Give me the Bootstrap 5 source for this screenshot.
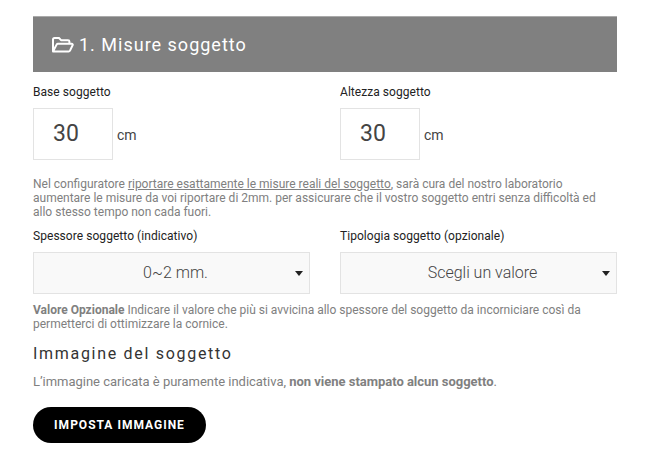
<!DOCTYPE html>
<html lang="it">
<head>
  <meta charset="UTF-8">
  <meta name="viewport" content="width=device-width, initial-scale=1.0">
  <title>Misure soggetto</title>
  <link href="https://cdn.jsdelivr.net/npm/bootstrap@5.3.0/dist/css/bootstrap.min.css" rel="stylesheet">
  <style>
    body {
      font-family: Roboto, "Liberation Sans", sans-serif;
      color: #222;
      background: #fff;
    }
    .config-wrap {
      width: 584px;
      margin-left: 33px;
      padding-top: 16px;
    }
    .step-head {
      background: #808080;
      border-top: 1px solid #aaa;
      height: 56px;
      padding-left: 19px;
      gap: 5px;
      color: #fff;
      font-size: 18px;
      letter-spacing: 1px;
    }
    .field-row {
      display: grid;
      grid-template-columns: 277px 277px;
      column-gap: 30px;
    }
    .row-sizes { margin-top: 13px; }
    .row-picks { margin-top: 10px; }
    .field-label {
      display: block;
      font-size: 12px;
      line-height: 14px;
      letter-spacing: .05px;
      margin: 0 0 9px;
      color: #222;
    }
    .size-box {
      width: 80px;
      height: 52px;
      border: 1px solid #e3e3e3;
      font-size: 23px;
      line-height: 50px;
      padding-left: 19px;
      color: #444;
    }
    .size-unit {
      font-size: 14px;
      color: #444;
      margin-left: 4px;
      margin-top: 3px;
    }
    .help-text {
      font-size: 12px;
      line-height: 14px;
      color: #808080;
      margin: 0;
    }
    .help-sizes { margin-top: 17px; }
    .help-picks { margin-top: 9px; }
    .help-text u { text-underline-offset: 1px; }
    .pick-box {
      height: 42px;
      background: #f9f9f9;
      border: 1px solid #e3e3e3;
      font-size: 16px;
      font-weight: 300;
      color: #444;
      padding: 0 6px 0 22px;
    }
    .pick-text { flex: 1; text-align: center; }
    .pick-arrow {
      width: 0;
      height: 0;
      border-left: 4px solid transparent;
      border-right: 4px solid transparent;
      border-top: 5px solid #222;
    }
    .img-title {
      font-size: 16px;
      line-height: 20px;
      font-weight: 400;
      letter-spacing: 1.7px;
      color: #333;
      margin: 13px 0 0;
    }
    .img-note {
      font-size: 13px;
      line-height: 16px;
      letter-spacing: -.02px;
      color: #808080;
      margin: 10px 0 0;
    }
    .btn-imposta {
      background: #000;
      color: #fff;
      border: 0;
      border-radius: 18px;
      width: 173px;
      height: 36px;
      margin-top: 17px;
      padding: 0;
      font-size: 12px;
      font-weight: 700;
      letter-spacing: 1px;
    }
    .btn-imposta:hover { background: #000; color: #fff; }
  </style>
</head>
<body>

<div class="config-wrap">
  <div class="step-head d-flex align-items-center">
    <svg width="22" height="16" viewBox="0 0 22 16" fill="none" stroke="#fff" stroke-width="2" stroke-linejoin="round">
      <path d="M1 14V2.5C1 1.7 1.6 1 2.5 1H7l2 2.2h7c.8 0 1.4.6 1.4 1.4V6.5"/>
      <path d="M1 14.5L4.6 7.6C4.9 7 5.4 6.7 6 6.7h13.6c.9 0 1.4.8 1 1.6l-2.6 5.3c-.3.6-.8.9-1.4.9H1z"/>
    </svg>
    <span>1. Misure soggetto</span>
  </div>

  <div class="field-row row-sizes">
    <div>
      <label class="field-label">Base soggetto</label>
      <div class="d-flex align-items-center">
        <div class="size-box">30</div>
        <span class="size-unit">cm</span>
      </div>
    </div>
    <div>
      <label class="field-label">Altezza soggetto</label>
      <div class="d-flex align-items-center">
        <div class="size-box">30</div>
        <span class="size-unit">cm</span>
      </div>
    </div>
  </div>

  <p class="help-text help-sizes">Nel configuratore <u>riportare esattamente le misure reali del soggetto</u>, sarà cura del nostro laboratorio<br>aumentare le misure da voi riportare di 2mm. per assicurare che il vostro soggetto entri senza difficoltà ed<br>allo stesso tempo non cada fuori.</p>

  <div class="field-row row-picks">
    <div>
      <label class="field-label">Spessore soggetto (indicativo)</label>
      <div class="pick-box d-flex align-items-center">
        <span class="pick-text">0~2 mm.</span>
        <span class="pick-arrow"></span>
      </div>
    </div>
    <div>
      <label class="field-label">Tipologia soggetto (opzionale)</label>
      <div class="pick-box d-flex align-items-center">
        <span class="pick-text">Scegli un valore</span>
        <span class="pick-arrow"></span>
      </div>
    </div>
  </div>

  <p class="help-text help-picks"><strong>Valore Opzionale</strong> Indicare il valore che più si avvicina allo spessore del soggetto da incorniciare così da<br>permetterci di ottimizzare la cornice.</p>

  <h5 class="img-title">Immagine del soggetto</h5>
  <p class="img-note">L’immagine caricata è puramente indicativa, <strong>non viene stampato alcun soggetto</strong>.</p>

  <button type="button" class="btn btn-imposta">IMPOSTA IMMAGINE</button>
</div>

<script src="https://cdn.jsdelivr.net/npm/bootstrap@5.3.0/dist/js/bootstrap.bundle.min.js"></script>
</body>
</html>
